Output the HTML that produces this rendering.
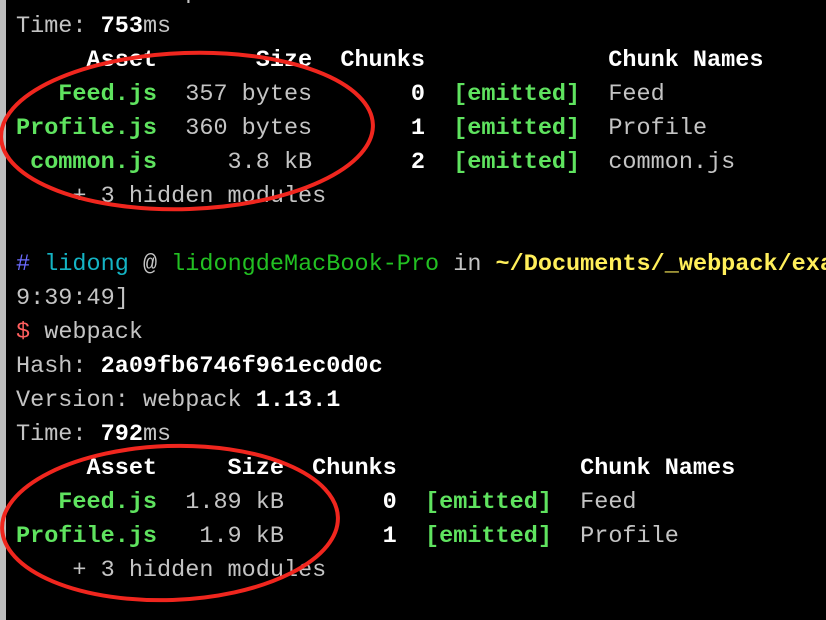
<!DOCTYPE html>
<html><head><meta charset="utf-8"><style>
html,body{margin:0;padding:0;background:#000;width:826px;height:620px;overflow:hidden;position:relative}
.l{position:absolute;left:0;width:6px;top:0;height:620px;background:#bdbdbd}
pre{position:absolute;left:16px;top:-24px;width:810px;overflow:hidden;margin:0;font-family:"Liberation Mono",monospace;font-size:23.5px;line-height:34px;color:#c4c4c4;white-space:pre}
b{color:#fff}
.g{color:#5fe35f;font-weight:bold}
.w{color:#fff;font-weight:bold}
.bl{color:#6b6bff}.cy{color:#14b4c4}.hg{color:#22c022}.y{color:#ffef5a;font-weight:bold}.r{color:#ff5f5f}
svg{position:absolute;left:0;top:0}
</style></head><body>
<div class="l"></div>
<pre>Version: webpack <b>1.13.1</b>
Time: <b>753</b>ms
<span class="w">     Asset       Size  Chunks             Chunk Names</span>
<span class="g">   Feed.js</span>  357 bytes       <b>0</b>  <span class="g">[emitted]</span>  Feed
<span class="g">Profile.js</span>  360 bytes       <b>1</b>  <span class="g">[emitted]</span>  Profile
<span class="g"> common.js</span>     3.8 kB       <b>2</b>  <span class="g">[emitted]</span>  common.js
    + 3 hidden modules

<span class="bl">#</span> <span class="cy">lidong</span> @ <span class="hg">lidongdeMacBook-Pro</span> in <span class="y">~/Documents/_webpack/examples</span>
9:39:49]
<span class="r">$</span> webpack
Hash: <b>2a09fb6746f961ec0d0c</b>
Version: webpack <b>1.13.1</b>
Time: <b>792</b>ms
<span class="w">     Asset     Size  Chunks             Chunk Names</span>
<span class="g">   Feed.js</span>  1.89 kB       <b>0</b>  <span class="g">[emitted]</span>  Feed
<span class="g">Profile.js</span>   1.9 kB       <b>1</b>  <span class="g">[emitted]</span>  Profile
    + 3 hidden modules</pre>
<svg width="826" height="620"><g fill="none" stroke="#f0261e" stroke-width="4">
<ellipse cx="187" cy="131" rx="186" ry="78" transform="rotate(-2 187 131)"/>
<ellipse cx="170" cy="523" rx="168" ry="77" transform="rotate(-2 170 523)"/>
</g></svg>
</body></html>
